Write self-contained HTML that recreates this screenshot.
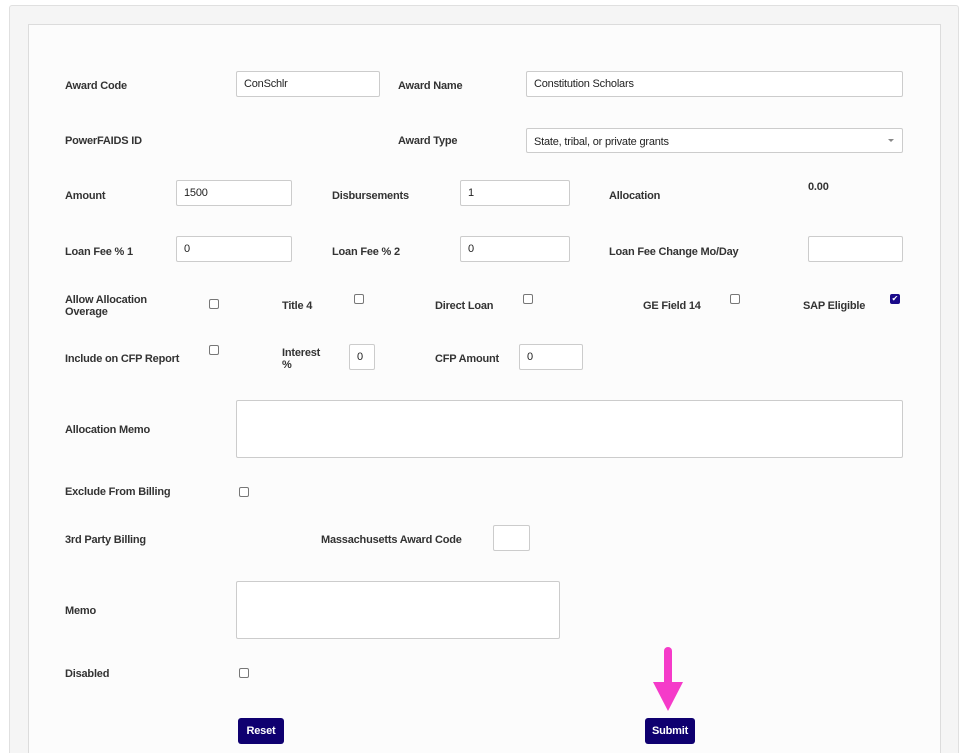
<!DOCTYPE html>
<html><head><style>
html,body{margin:0;width:968px;height:753px;overflow:hidden;}
body{background:#fff;position:relative;font-family:"Liberation Sans",Arial,sans-serif;}
.outer{position:absolute;left:9px;top:5px;width:948px;height:760px;background:#f5f5f5;border:1px solid #e0e0e0;border-radius:3px;}
.inner{position:absolute;left:28px;top:24px;width:911px;height:740px;background:#fcfcfc;border:1px solid #dcdcdc;}
.l{position:absolute;font-size:11px;font-weight:bold;color:#333;line-height:12px;letter-spacing:-0.2px;margin-top:1px;}
.i{position:absolute;box-sizing:border-box;background:#fff;border:1px solid #ccc;border-radius:2px;font-size:11px;color:#222;padding:0 7px;display:flex;align-items:center;letter-spacing:-0.2px;}
.cb{position:absolute;width:8px;height:8px;border:1px solid #777;border-radius:2px;background:#fff;}
.btn{position:absolute;background:#0f0070;color:#fff;font-size:11px;font-weight:bold;border-radius:3px;display:flex;align-items:center;justify-content:center;letter-spacing:-0.2px;}
</style></head><body>
<div class="outer"></div>
<div class="inner"></div>

<div class="l" style="left:65px;top:79px">Award Code</div>
<div class="i" style="left:236px;top:71px;width:144px;height:26px">ConSchlr</div>
<div class="l" style="left:398px;top:79px">Award Name</div>
<div class="i" style="left:526px;top:71px;width:377px;height:26px">Constitution Scholars</div>

<div class="l" style="left:65px;top:134px">PowerFAIDS ID</div>
<div class="l" style="left:398px;top:134px">Award Type</div>
<div class="i" style="left:526px;top:128px;width:377px;height:25px;padding-top:3px">State, tribal, or private grants<span style="position:absolute;right:8px;top:10px;border-left:3px solid transparent;border-right:3px solid transparent;border-top:3px solid #888"></span></div>

<div class="l" style="left:65px;top:189px">Amount</div>
<div class="i" style="left:176px;top:180px;width:116px;height:26px">1500</div>
<div class="l" style="left:332px;top:189px">Disbursements</div>
<div class="i" style="left:460px;top:180px;width:110px;height:26px">1</div>
<div class="l" style="left:609px;top:189px">Allocation</div>
<div class="l" style="left:808px;top:180px">0.00</div>

<div class="l" style="left:65px;top:245px">Loan Fee % 1</div>
<div class="i" style="left:176px;top:236px;width:116px;height:26px">0</div>
<div class="l" style="left:332px;top:245px">Loan Fee % 2</div>
<div class="i" style="left:460px;top:236px;width:110px;height:26px">0</div>
<div class="l" style="left:609px;top:245px">Loan Fee Change Mo/Day</div>
<div class="i" style="left:808px;top:236px;width:95px;height:26px"></div>

<div class="l" style="left:65px;top:293px">Allow Allocation<br>Overage</div>
<div class="cb" style="left:209px;top:299px"></div>
<div class="l" style="left:282px;top:299px">Title 4</div>
<div class="cb" style="left:354px;top:294px"></div>
<div class="l" style="left:435px;top:299px">Direct Loan</div>
<div class="cb" style="left:523px;top:294px"></div>
<div class="l" style="left:643px;top:299px">GE Field 14</div>
<div class="cb" style="left:730px;top:294px"></div>
<div class="l" style="left:803px;top:299px">SAP Eligible</div>
<div class="cb" style="left:890px;top:294px;background:#1a0a8a;border-color:#1a0a8a;color:#fff;font-size:8px;line-height:8px;text-align:center">✔</div>

<div class="l" style="left:65px;top:352px">Include on CFP Report</div>
<div class="cb" style="left:209px;top:345px"></div>
<div class="l" style="left:282px;top:346px">Interest<br>%</div>
<div class="i" style="left:349px;top:344px;width:26px;height:26px">0</div>
<div class="l" style="left:435px;top:352px">CFP Amount</div>
<div class="i" style="left:519px;top:344px;width:64px;height:26px">0</div>

<div class="l" style="left:65px;top:423px">Allocation Memo</div>
<div class="i" style="left:236px;top:400px;width:667px;height:58px"></div>

<div class="l" style="left:65px;top:485px">Exclude From Billing</div>
<div class="cb" style="left:239px;top:487px"></div>

<div class="l" style="left:65px;top:533px">3rd Party Billing</div>
<div class="l" style="left:321px;top:533px">Massachusetts Award Code</div>
<div class="i" style="left:493px;top:525px;width:37px;height:26px"></div>

<div class="l" style="left:65px;top:604px">Memo</div>
<div class="i" style="left:236px;top:581px;width:324px;height:58px"></div>

<div class="l" style="left:65px;top:667px">Disabled</div>
<div class="cb" style="left:239px;top:668px"></div>

<div class="btn" style="left:238px;top:718px;width:46px;height:26px">Reset</div>
<div class="btn" style="left:645px;top:718px;width:50px;height:26px">Submit</div>

<svg style="position:absolute;left:650px;top:645px" width="36" height="70"><line x1="18" y1="6" x2="18" y2="40" stroke="#f53bc9" stroke-width="8" stroke-linecap="round"/><polygon points="3,37 33,37 18,66" fill="#f53bc9"/></svg>
</body></html>
